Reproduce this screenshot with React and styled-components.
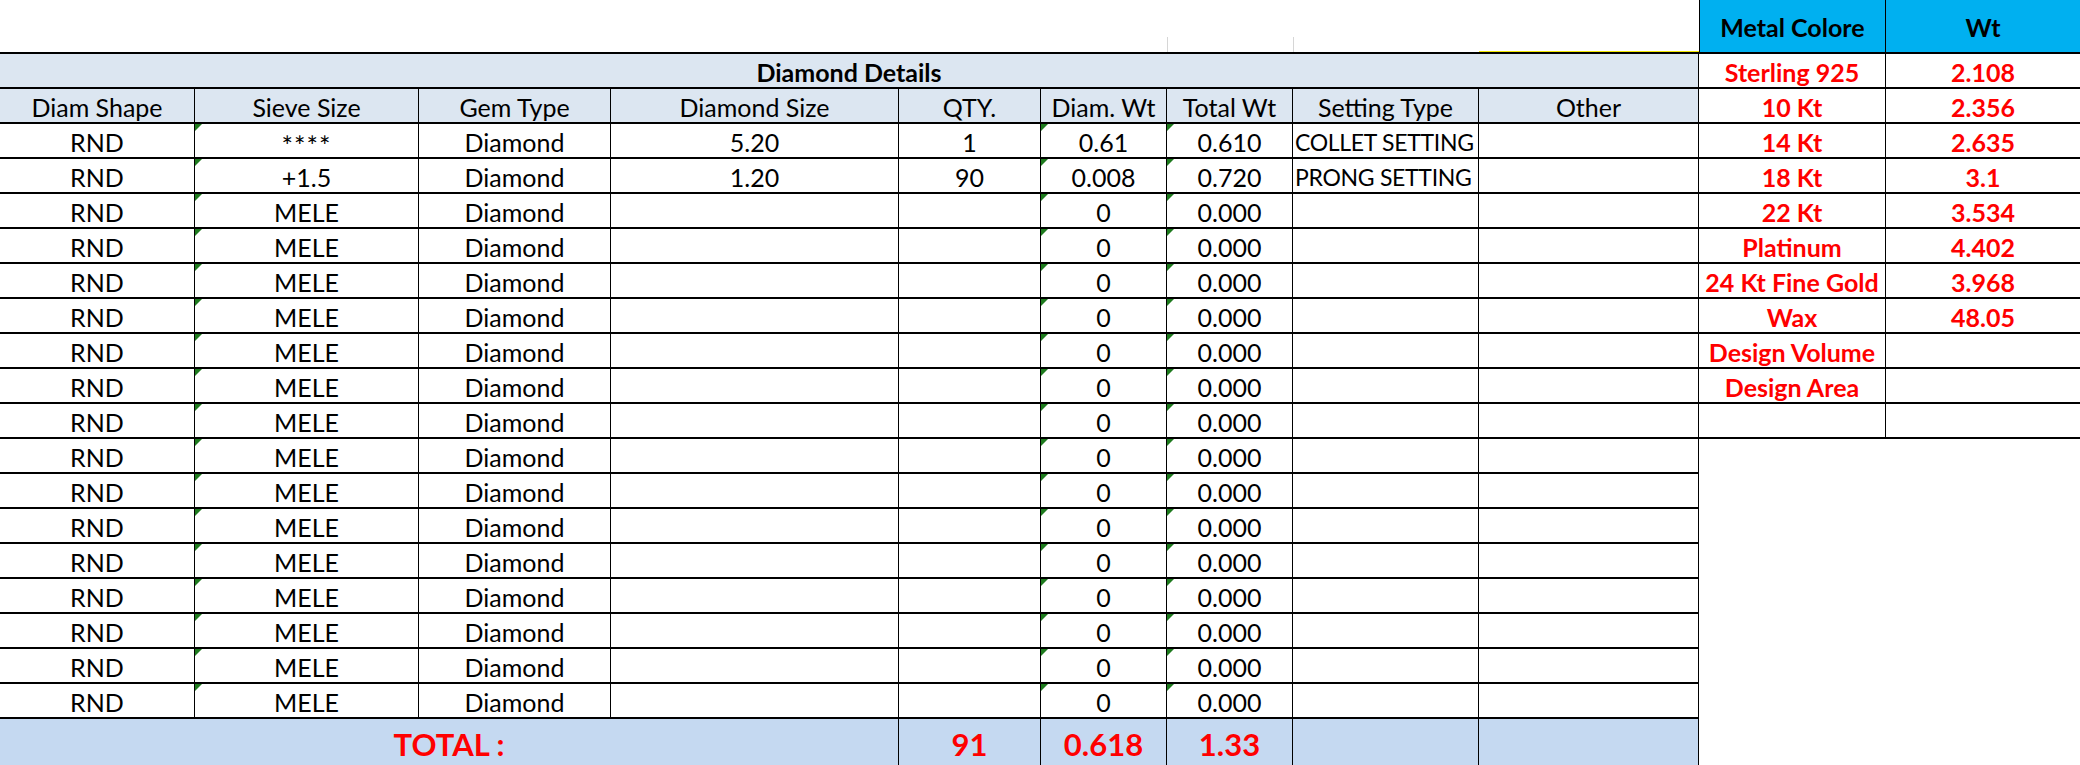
import styled, { createGlobalStyle } from "styled-components";

const GlobalStyle = createGlobalStyle`
  html, body {
    margin: 0;
    padding: 0;
    background: #fff;
  }
  body {
    width: 2080px;
    height: 765px;
    overflow: hidden;
    font-family: Lato, "Liberation Sans", sans-serif;
    color: #000;
  }
`

const COLS = "195px 224px 192px 288px 142px 126px 126px 186px 220px";

const Sheet = styled.div`
    display: flex;
    align-items: flex-start;
    width: 2080px;
`

const LeftPane = styled.div`
    width: 1699px;
    display: flex;
    flex-direction: column;
`

const Gap = styled.div`
    display: grid;
    grid-template-columns: ${COLS};
    height: 52px;
`

const GapCell = styled.div`
    align-self: end;
    height: 15px;
    box-sizing: border-box;
    border-left: ${props => props.$tick ? "1px solid #d6d6d6" : "none"};
    border-bottom: ${props => props.$yellow ? "1px solid #f2e600" : "none"};
`

const Grid = styled.div`
    display: grid;
    grid-template-columns: ${COLS};
    grid-template-rows: repeat(19, 35px) 52px;
    border-top: 2px solid #000;
`

const Cell = styled.div`
    box-sizing: border-box;
    position: relative;
    display: flex;
    align-items: center;
    justify-content: ${props => props.$left ? "flex-start" : "center"};
    padding: 2px ${props => props.$left ? "2px" : "4px"} 0;
    border-right: 1px solid #000;
    border-bottom: 2px solid #000;
    background: ${props => props.$fill || "#fff"};
    grid-column: ${props => props.$span ? `span ${props.$span}` : "auto"};
    font-size: ${props => props.$left ? "23px" : "25px"};
    letter-spacing: ${props => props.$left ? "-0.3px" : "normal"};
    font-weight: ${props => props.$bold ? 700 : 400};
    white-space: nowrap;

    &::before {
        content: "";
        display: ${props => props.$flag ? "block" : "none"};
        position: absolute;
        top: 0;
        left: 0;
        border-top: 7px solid #1e7b1e;
        border-right: 7px solid transparent;
    }
`

const Stars = styled.span`
    font-size: 27px;
    letter-spacing: 1px;
    position: relative;
    top: 4px;
`

const TotalCell = styled(Cell)`
    background: #c5d9f1;
    color: #ff0000;
    font-size: 31px;
    font-weight: 700;
    align-items: flex-start;
    padding-top: 6px;
    border-bottom: none;
`

const RightPane = styled.div`
    width: 381px;
    display: grid;
    grid-template-columns: 187px 194px;
    grid-template-rows: 54px repeat(11, 35px);
`

const MetalHead = styled.div`
    box-sizing: border-box;
    display: flex;
    align-items: center;
    justify-content: center;
    padding-top: 2px;
    background: #00b0f0;
    border-left: ${props => props.$first ? "1px solid #000" : "none"};
    border-right: ${props => props.$first ? "1px solid #000" : "none"};
    border-bottom: 2px solid #000;
    font-size: 25px;
    font-weight: 700;
`

const MetalCell = styled.div`
    box-sizing: border-box;
    display: flex;
    align-items: center;
    justify-content: center;
    padding-top: 2px;
    border-right: ${props => props.$first ? "1px solid #000" : "none"};
    border-bottom: 2px solid #000;
    color: #ff0000;
    font-size: 25px;
    font-weight: 700;
    white-space: nowrap;
`

const HEADERS = ["Diam Shape", "Sieve Size", "Gem Type", "Diamond Size", "QTY.", "Diam. Wt", "Total Wt", "Setting Type", "Other"];

const ROWS = [
    ["RND", "****", "Diamond", "5.20", "1", "0.61", "0.610", "COLLET SETTING", ""],
    ["RND", "+1.5", "Diamond", "1.20", "90", "0.008", "0.720", "PRONG SETTING", ""],
    ...Array.from({ length: 15 }, () => ["RND", "MELE", "Diamond", "", "", "0", "0.000", "", ""]),
];

const FLAGGED = [1, 5, 6];

const METALS = [
    ["Sterling 925", "2.108"],
    ["10 Kt", "2.356"],
    ["14 Kt", "2.635"],
    ["18 Kt", "3.1"],
    ["22 Kt", "3.534"],
    ["Platinum", "4.402"],
    ["24 Kt Fine Gold", "3.968"],
    ["Wax", "48.05"],
    ["Design Volume", ""],
    ["Design Area", ""],
    ["", ""],
];

const HEAD_FILL = "#dce6f1";

export default function App() {
    return (
        <>
            <GlobalStyle />
            <Sheet>
                <LeftPane>
                    <Gap>
                        {HEADERS.map((h, i) => (
                            <GapCell key={h} $tick={i === 6 || i === 7} $yellow={i === 8} />
                        ))}
                    </Gap>
                    <Grid>
                        <Cell $span={9} $bold $fill={HEAD_FILL}>Diamond Details</Cell>
                        {HEADERS.map(h => (
                            <Cell key={h} $fill={HEAD_FILL}>{h}</Cell>
                        ))}
                        {ROWS.map((row, r) =>
                            row.map((v, c) => (
                                <Cell key={`${r}-${c}`} $flag={FLAGGED.includes(c)} $left={c === 7}>
                                    {v === "****" ? <Stars>{v}</Stars> : v}
                                </Cell>
                            ))
                        )}
                        <TotalCell $span={4}>TOTAL :</TotalCell>
                        <TotalCell>91</TotalCell>
                        <TotalCell>0.618</TotalCell>
                        <TotalCell>1.33</TotalCell>
                        <TotalCell />
                        <TotalCell />
                    </Grid>
                </LeftPane>
                <RightPane>
                    <MetalHead $first>Metal Colore</MetalHead>
                    <MetalHead>Wt</MetalHead>
                    {METALS.map(([name, wt], i) => [
                        <MetalCell key={`n${i}`} $first>{name}</MetalCell>,
                        <MetalCell key={`w${i}`}>{wt}</MetalCell>,
                    ])}
                </RightPane>
            </Sheet>
        </>
    )
}
